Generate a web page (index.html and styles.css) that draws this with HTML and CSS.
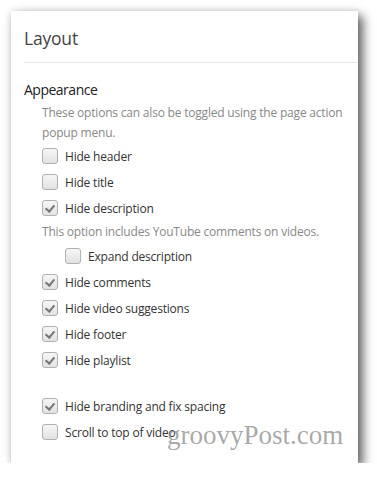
FILE: index.html
```html
<!DOCTYPE html>
<html lang="en">
<head>
    <meta charset="utf-8">
    <title>Layout options</title>
    <link rel="stylesheet" href="styles.css">
</head>
<body>
    <div class="card">
        <header class="card-head">
            <h1>Layout</h1>
        </header>
        <section class="group">
            <h2>Appearance</h2>
            <p class="hint">These options can also be toggled using the page action popup menu.</p>

            <label class="opt"><span class="box"></span>Hide header</label>
            <label class="opt"><span class="box"></span>Hide title</label>
            <label class="opt"><span class="box on"></span>Hide description</label>
            <p class="note">This option includes YouTube comments on videos.</p>
            <label class="opt sub"><span class="box"></span>Expand description</label>
            <label class="opt"><span class="box on"></span>Hide comments</label>
            <label class="opt"><span class="box on"></span>Hide video suggestions</label>
            <label class="opt"><span class="box on"></span>Hide footer</label>
            <label class="opt"><span class="box on"></span>Hide playlist</label>

            <div class="spacer"></div>
            <label class="opt"><span class="box on"></span>Hide branding and fix spacing</label>
            <label class="opt"><span class="box"></span>Scroll to top of video</label>
        </section>
        <div class="mark">groovyPost.com</div>
    </div>
</body>
</html>
```

FILE: styles.css
```css
body {
    margin: 0;
    background: #fff;
    font-family: "Open Sans", "Noto Sans", sans-serif;
    color: #333;
}

.card {
    position: relative;
    margin: 11px 0 0 11px;
    width: 347px;
    height: 452px;
    background: #fff;
    box-shadow: 5px 5px 10px rgba(0, 0, 0, 0.6), 0 0 8px rgba(0, 0, 0, 0.12);
}

.card-head {
    margin-left: 13px;
    padding: 14px 0 11px;
    border-bottom: 1px solid #e6e6e6;
}

.card-head h1 {
    margin: 0;
    font-size: 17.5px;
    letter-spacing: -0.2px;
    line-height: 26px;
    font-weight: normal;
    color: #444;
}

.group {
    padding: 17px 0 0 13px;
}

.group h2 {
    margin: 0;
    font-size: 14px;
    letter-spacing: -0.5px;
    line-height: 20px;
    font-weight: normal;
    color: #222;
}

.hint {
    margin: 3px 0 0 18px;
    width: 312px;
    font-size: 12px;
    letter-spacing: -0.2px;
    line-height: 20px;
    color: #888;
}

.note {
    margin: 0 0 0 18px;
    font-size: 12px;
    letter-spacing: -0.2px;
    line-height: 22px;
    color: #888;
}

.opt {
    display: flex;
    align-items: center;
    gap: 7px;
    height: 26px;
    margin-left: 18px;
    font-size: 12px;
    letter-spacing: -0.2px;
}

.opt.sub {
    margin-left: 41px;
}

.box {
    width: 14px;
    height: 14px;
    border: 1px solid #b0b0b0;
    border-radius: 3px;
    background: linear-gradient(#f6f6f6, #e2e2e2);
    position: relative;
}

.box.on::after {
    content: "";
    position: absolute;
    left: 4px;
    top: 2px;
    width: 4px;
    height: 7px;
    border: solid #777;
    border-width: 0 2px 2px 0;
    transform: rotate(40deg);
}

.spacer {
    height: 20px;
}

.mark {
    position: absolute;
    left: 156px;
    top: 409px;
    font-family: "Liberation Serif", serif;
    font-size: 27px;
    color: rgba(130, 130, 130, 0.7);
}
```
